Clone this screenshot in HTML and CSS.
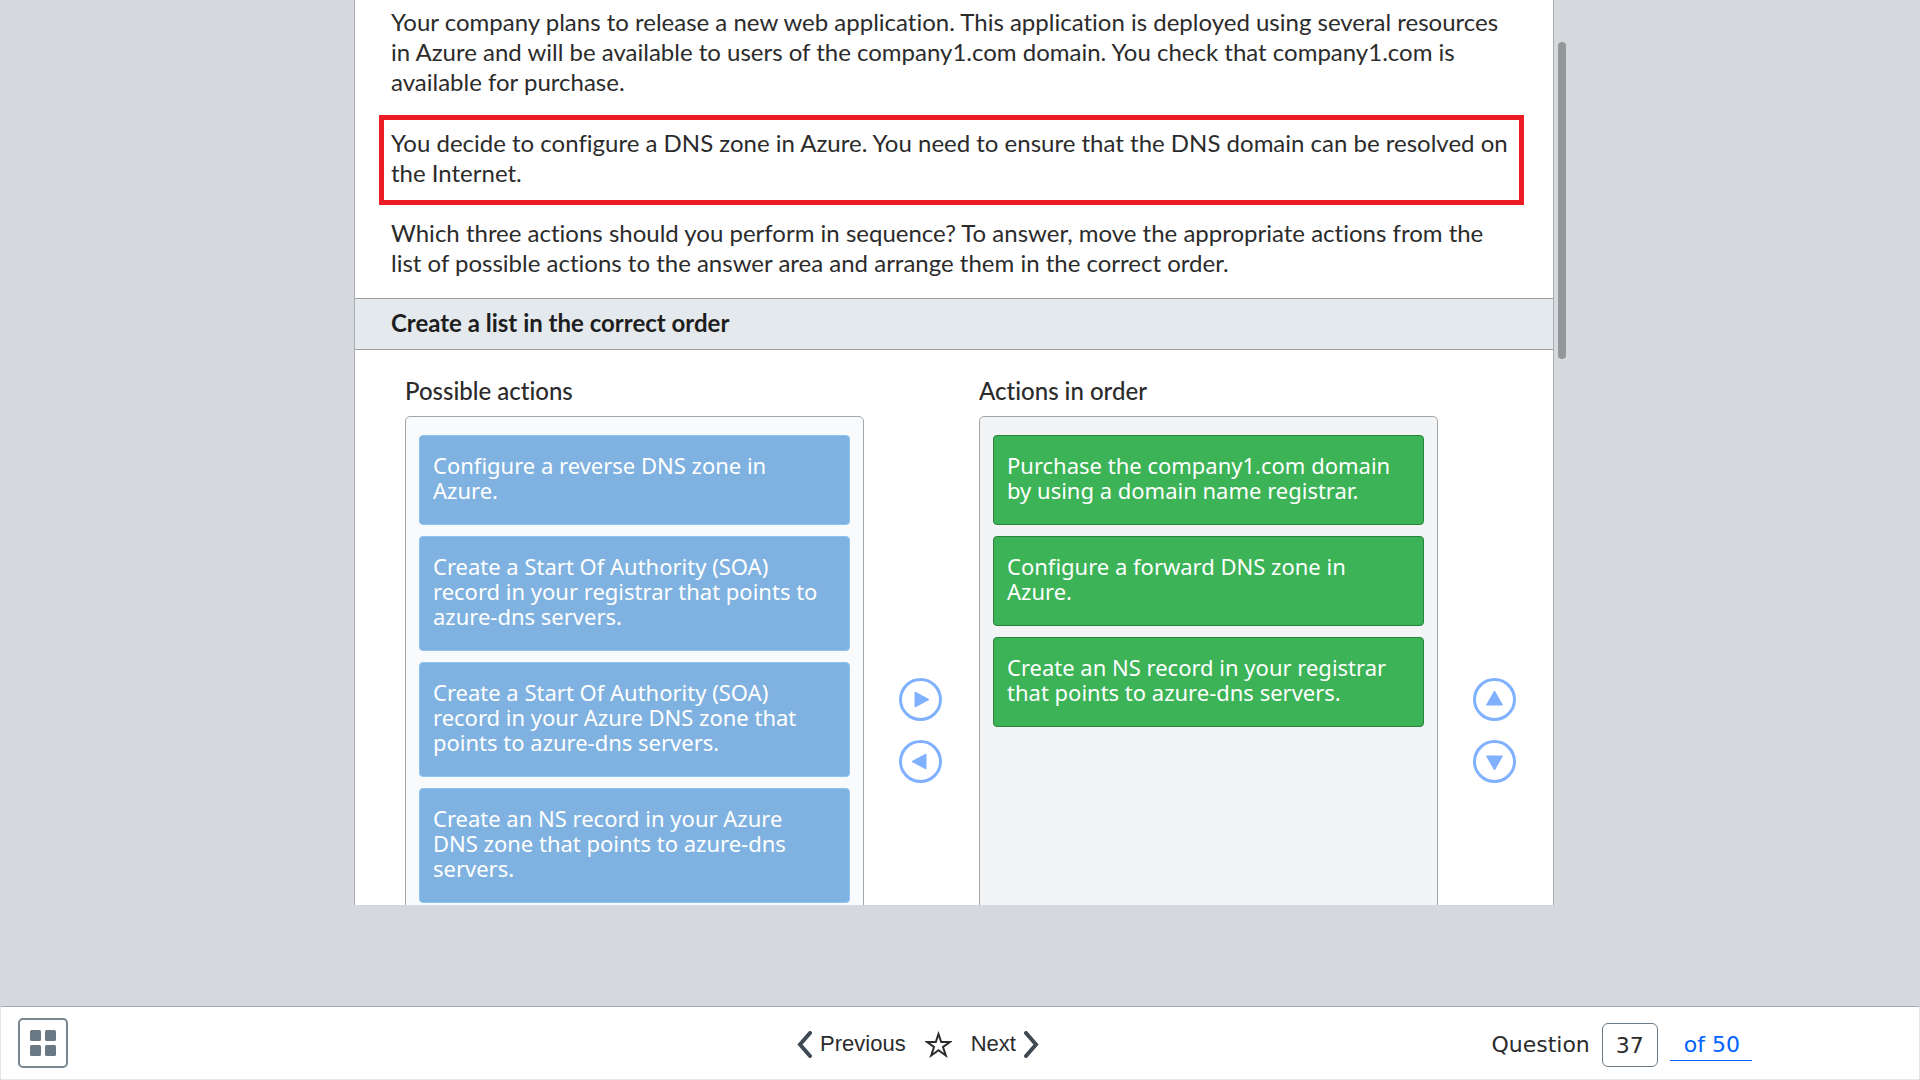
FILE: index.html
```html
<!DOCTYPE html>
<html lang="en">
<head>
<meta charset="utf-8">
<title>Question 37 of 50</title>
<link rel="stylesheet" href="styles.css">
</head>
<body>
<main class="stage">
  <article class="panel">
    <div class="prompt">
      <p>Your company plans to release a new web application. This application is deployed using several resources in Azure and will be available to users of the company1.com domain. You check that company1.com is available for purchase.</p>
      <p class="highlight">You decide to configure a DNS zone in Azure. You need to ensure that the DNS domain can be resolved on the Internet.</p>
      <p>Which three actions should you perform in sequence? To answer, move the appropriate actions from the list of possible actions to the answer area and arrange them in the correct order.</p>
    </div>
    <h2 class="band">Create a list in the correct order</h2>
    <div class="lists">
      <section class="column">
        <h3>Possible actions</h3>
        <div class="column-body">
          <ul class="list list-source">
            <li><button type="button" class="card">Configure a reverse DNS zone in Azure.</button></li>
            <li><button type="button" class="card">Create a Start Of Authority (SOA) record in your registrar that points to azure-dns servers.</button></li>
            <li><button type="button" class="card">Create a Start Of Authority (SOA) record in your Azure DNS zone that points to azure-dns servers.</button></li>
            <li><button type="button" class="card">Create an NS record in your Azure DNS zone that points to azure-dns servers.</button></li>
          </ul>
          <div class="movers">
            <button type="button" class="mover" aria-label="Add action"><svg viewBox="0 0 43 43"><circle cx="21.5" cy="21.5" r="20"/><path d="M16 14v15l14-7.500z"/></svg></button>
            <button type="button" class="mover" aria-label="Remove action"><svg viewBox="0 0 43 43"><circle cx="21.5" cy="21.5" r="20"/><path d="M27 14v15l-14-7.500z"/></svg></button>
          </div>
        </div>
      </section>
      <section class="column">
        <h3>Actions in order</h3>
        <div class="column-body">
          <ol class="list list-answer">
            <li><button type="button" class="card">Purchase the company1.com domain by using a domain name registrar.</button></li>
            <li><button type="button" class="card">Configure a forward DNS zone in Azure.</button></li>
            <li><button type="button" class="card">Create an NS record in your registrar that points to azure-dns servers.</button></li>
          </ol>
          <div class="movers">
            <button type="button" class="mover" aria-label="Move up"><svg viewBox="0 0 43 43"><circle cx="21.5" cy="21.5" r="20"/><path d="M13.500 27h16l-8-14z"/></svg></button>
            <button type="button" class="mover" aria-label="Move down"><svg viewBox="0 0 43 43"><circle cx="21.5" cy="21.5" r="20"/><path d="M13.500 16h16l-8 14z"/></svg></button>
          </div>
        </div>
      </section>
    </div>
  </article>
  <div class="scroll-thumb"></div>
</main>
<footer class="toolbar">
  <button type="button" class="grid-button" aria-label="All questions">
    <svg viewBox="0 0 26 26"><rect width="11" height="11" rx="1.500"/><rect x="15" width="11" height="11" rx="1.500"/><rect y="15" width="11" height="11" rx="1.500"/><rect x="15" y="15" width="11" height="11" rx="1.500"/></svg>
  </button>
  <nav class="pager">
    <button type="button" class="step"><svg class="chevron" viewBox="0 0 15 27"><path d="M13 2L3 13.500L13 25"/></svg>Previous</button>
    <button type="button" class="star" aria-label="Bookmark"><svg viewBox="0 0 27 27"><path d="M13.500 3L16.200 11H25L18 16L20.800 24.500L13.500 19.300L6.200 24.500L9 16L2 11H10.800z"/></svg></button>
    <button type="button" class="step">Next<svg class="chevron" viewBox="0 0 15 27"><path d="M2 2L12 13.500L2 25"/></svg></button>
  </nav>
  <div class="jump">
    <label for="question">Question</label>
    <input id="question" type="text" value="37">
    <a href="#all">of 50</a>
  </div>
</footer>
</body>
</html>
```
FILE: styles.css
```css
* {
  box-sizing: border-box;
}

body {
  display: flex;
  flex-direction: column;
  height: 100vh;
  margin: 0;
  overflow: hidden;
  background: #d5d9de;
  color: #2b2b2b;
  font-family: Lato, sans-serif;
  font-size: 24px;
  font-variant-ligatures: none;
  line-height: 30px;
}

button {
  padding: 0;
  border: 0;
  background: none;
  color: inherit;
  font: inherit;
  cursor: pointer;
}

svg {
  display: block;
}

.stage {
  display: flex;
  flex: 1;
  justify-content: center;
  min-height: 0;
  padding-bottom: 101px;
}

.panel {
  flex: 0 1 1200px;
  overflow: hidden;
  border: solid #a9adb0;
  border-width: 0 1px;
  background: #fff;
}

.scroll-thumb {
  flex: none;
  width: 8px;
  height: 35%;
  margin: 42px 0 0 4px;
  border-radius: 4px;
  background: #929799;
}

.prompt {
  padding: 7px 29px 20px 24px;
}

.prompt p {
  margin: 0;
  padding: 0 12px;
}

.prompt .highlight {
  margin: 18px 0 13px;
  padding: 8px 7px 12px;
  border: 5px solid #ee1c25;
}

.band {
  margin: 0;
  padding: 9px 36px 11px;
  border: solid #9a9fa3;
  border-width: 1px 0;
  background: #e4e9ed;
  color: #1e1e1e;
  font-size: 24px;
  font-weight: 700;
}

.lists {
  display: grid;
  grid-template-columns: 1fr 1fr;
  padding: 26px 0 0 50px;
}

.column {
  display: flex;
  flex-direction: column;
}

.column h3 {
  margin: 0 0 10px;
  font-size: 24px;
  font-weight: 500;
}

.column-body {
  display: flex;
  flex: 1;
}

.list {
  display: flex;
  flex: 1;
  flex-direction: column;
  gap: 11px;
  min-height: 629px;
  margin: 0;
  padding: 18px 13px;
  border: 1px solid #a3a6a8;
  border-radius: 5px;
  list-style: none;
}

.list-source {
  background: #f9fafc;
}

.list-answer {
  background: #f3f4f6;
}

.card {
  display: block;
  width: 100%;
  padding: 17px 20px 21px 13px;
  border: 1px solid;
  border-radius: 4px;
  color: #fff;
  font-family: "Noto Sans", sans-serif;
  font-size: 22px;
  line-height: 25px;
  text-align: left;
}

.list-source .card {
  border-color: #8cc3f3;
  background: #7fb2e0;
}

.list-answer .card {
  border-color: #26843c;
  background: #3bb356;
}

.movers {
  display: flex;
  flex: 0 0 115px;
  flex-direction: column;
  gap: 19px;
  align-items: center;
  justify-content: center;
  padding-right: 2px;
}

.mover svg {
  width: 43px;
  height: 43px;
  stroke: #80b1ff;
  stroke-linejoin: round;
}

.mover circle {
  fill: #fff;
  stroke-width: 3;
}

.mover path {
  fill: #80b1ff;
}

.toolbar {
  display: grid;
  flex: none;
  grid-template-columns: 1fr auto 1fr;
  align-items: center;
  height: 74px;
  border: 1px solid #e5e6e7;
  border-top-color: #a2a9ad;
  border-radius: 2px;
  background: #fff;
}

.grid-button {
  display: grid;
  place-items: center;
  width: 50px;
  height: 50px;
  margin-left: 17px;
  border: 2px solid #788690;
  border-radius: 5px;
}

.grid-button svg {
  width: 26px;
  fill: #6b7984;
}

.pager {
  display: flex;
  gap: 19px;
  align-items: center;
  margin: 2px 84px 0 0;
  font-family: "Liberation Sans", Arial, sans-serif;
  font-size: 22px;
}

.step {
  display: flex;
  gap: 8px;
  align-items: center;
}

.chevron {
  width: 15px;
  height: 27px;
  fill: none;
  stroke: #3f4a54;
  stroke-width: 4;
  stroke-linecap: round;
}

.star svg {
  width: 27px;
  height: 27px;
  fill: none;
  stroke: #2b2b2b;
  stroke-width: 2;
}

.jump {
  display: flex;
  align-items: center;
  justify-self: end;
  margin-top: 4px;
  padding-right: 167px;
  font-family: "DejaVu Sans", Verdana, sans-serif;
  font-size: 22px;
}

.jump input {
  width: 56px;
  height: 44px;
  margin: 0 12px;
  padding: 0;
  border: 1px solid #6b7984;
  border-radius: 6px;
  background: #fff;
  color: inherit;
  font: inherit;
  text-align: center;
}

.jump a {
  padding: 0 12px 0 14px;
  border-bottom: 1px solid #0063ff;
  color: #0063ff;
  text-decoration: none;
}
```
